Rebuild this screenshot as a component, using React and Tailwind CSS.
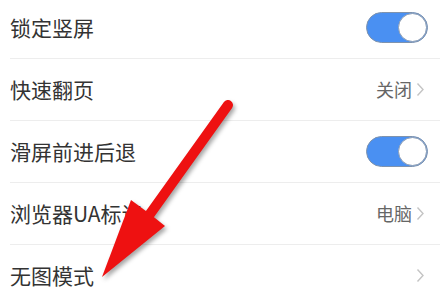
import React from 'react'

const rows = [
    { label: '锁定竖屏', type: 'toggle' },
    { label: '快速翻页', type: 'value', value: '关闭' },
    { label: '滑屏前进后退', type: 'toggle' },
    { label: '浏览器UA标识', type: 'value', value: '电脑' },
    { label: '无图模式', type: 'value', value: '' },
];

const Toggle = () => (
    <div className="relative w-[62px] h-[31px] rounded-full bg-[#4a90f2] border border-[#7f93ad]">
        <div className="absolute right-[0px] top-[0px] w-[29px] h-[29px] rounded-full bg-white border border-[#8b9cb3]" />
    </div>
)

const Chevron = () => (
    <svg width="9" height="15" viewBox="0 0 9 15" className="ml-[4px]">
        <path d="M1.5 1.5 L7 7.5 L1.5 13.5" fill="none" stroke="#c4c4c4" strokeWidth="1.4" />
    </svg>
)

const App = () => {
    return (
        <div
            className="relative w-[440px] h-[305px] overflow-hidden bg-white"
            style={{ fontFamily: '"Noto Sans CJK SC", "Noto Sans", sans-serif' }}
        >
            <div className="-mt-[3px] pl-[10px]">
                {rows.map((row, i) => (
                    <div key={i} className="h-[62px] flex items-center justify-between border-b border-[#ededed] pr-[12px]">
                        <span className="text-[21px] text-[#333333]">{row.label}</span>
                        {row.type === 'toggle' ? (
                            <Toggle />
                        ) : (
                            <div className="flex items-center pr-[3px]">
                                <span className="text-[18px] text-[#666666]">{row.value}</span>
                                <Chevron />
                            </div>
                        )}
                    </div>
                ))}
            </div>

            {/* red arrow overlay */}
            <svg
                className="absolute left-0 top-0 pointer-events-none"
                width="440"
                height="305"
                viewBox="0 0 440 305"
                style={{ filter: 'drop-shadow(2px 3px 2px rgba(0,0,0,0.35))' }}
            >
                <line x1="228" y1="105" x2="150" y2="214" stroke="#ee1111" strokeWidth="10" strokeLinecap="round" />
                <polygon points="102,277 131,200 150,214 165,226" fill="#ee1111" />
            </svg>
        </div>
    )
}

export default App
